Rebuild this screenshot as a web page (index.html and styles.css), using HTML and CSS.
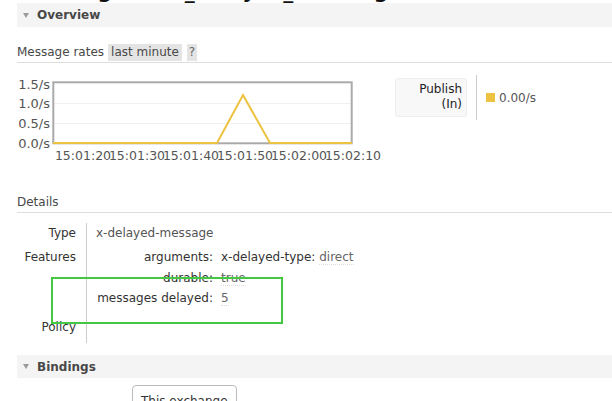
FILE: index.html
```html
<!DOCTYPE html>
<html>
<head>
<meta charset="utf-8">
<link rel="stylesheet" href="styles.css">
</head>
<body>
<div class="page">
  <h1 class="title">Exchange: test_delayed_exchange</h1>

  <div class="section-head"><span class="tri"></span><span class="head-text">Overview</span></div>

  <div class="rates">
    <span>Message rates</span>
    <span class="pill">last minute</span>
    <span class="pill q">?</span>
  </div>

  <div class="chart-row">
    <svg class="chart" width="370" height="90" viewBox="0 0 370 90">
      <line x1="37" y1="29.5" x2="335" y2="29.5" stroke="#f0f0f0" stroke-width="1"/>
      <line x1="37" y1="49.5" x2="335" y2="49.5" stroke="#f0f0f0" stroke-width="1"/>
      <rect x="36.3" y="8.3" width="298.4" height="61" fill="none" stroke="#aaaaaa" stroke-width="2"/>
      <polyline points="36,69 200,69 226,21 253,69 335,69" fill="none" stroke="#edc240" stroke-width="2" stroke-linejoin="miter"/>
      <g class="ylab">
        <text x="33" y="14.5" text-anchor="end">1.5/s</text>
        <text x="33" y="33.5" text-anchor="end">1.0/s</text>
        <text x="33" y="53.5" text-anchor="end">0.5/s</text>
        <text x="33" y="73.5" text-anchor="end">0.0/s</text>
      </g>
      <g class="xlab">
        <text x="66" y="86" text-anchor="middle">15:01:20</text>
        <text x="120" y="86" text-anchor="middle">15:01:30</text>
        <text x="174" y="86" text-anchor="middle">15:01:40</text>
        <text x="228" y="86" text-anchor="middle">15:01:50</text>
        <text x="282" y="86" text-anchor="middle">15:02:00</text>
        <text x="336" y="86" text-anchor="middle">15:02:10</text>
      </g>
    </svg>
    <div class="legend">
      <div class="legend-label"><div class="legend-box">Publish<br>(In)</div></div>
      <div class="legend-value"><span class="swatch"></span><span>0.00/s</span></div>
    </div>
  </div>

  <div class="details-title">Details</div>

  <div class="details">
    <div class="lbl r-type">Type</div>
    <div class="val r-type">x-delayed-message</div>

    <div class="lbl r-feat">Features</div>
    <div class="val r-feat">
      <div class="kv">
        <div class="k">arguments:</div>
        <div class="v"><span class="dark">x-delayed-type:</span> <span class="ul">direct</span></div>
        <div class="k">durable:</div>
        <div class="v"><span class="ul">true</span></div>
        <div class="k">messages delayed:</div>
        <div class="v"><span class="ul">5</span></div>
      </div>
    </div>

    <div class="lbl r-pol">Policy</div>
    <div class="val r-pol"></div>
  </div>

  <div class="section-head bindings"><span class="tri"></span><span class="head-text">Bindings</span></div>

  <div class="bind-btn">This exchange</div>
</div>

<div class="highlight"></div>
</body>
</html>
```

FILE: styles.css
```css
html, body {
  margin: 0;
  padding: 0;
  background: #ffffff;
}

body {
  font-family: "DejaVu Sans", Verdana, sans-serif;
  font-size: 12px;
  color: #484848;
  overflow: hidden;
  width: 612px;
  height: 401px;
}

.page {
  padding-left: 17px;
}

.title {
  margin: -21px 0 0 0;
  height: 24px;
  font-size: 20px;
  line-height: 24px;
  font-weight: bold;
  color: #111;
  white-space: nowrap;
}

.section-head {
  display: flex;
  align-items: center;
  height: 24px;
  background: #f4f4f4;
}

.tri {
  width: 0;
  height: 0;
  margin-left: 6px;
  border-top: 5px solid #9a9a9a;
  border-left: 3.5px solid transparent;
  border-right: 3.5px solid transparent;
}

.head-text {
  margin-left: 8px;
  font-weight: bold;
  color: #484848;
}

.rates {
  margin-top: 17px;
  display: flex;
  align-items: center;
  height: 17px;
  line-height: 17px;
  padding-bottom: 1px;
  border-bottom: 1px solid #dddddd;
  white-space: nowrap;
}

.pill {
  background: #e4e4e4;
  padding: 0 3px;
  margin-left: 4px;
  color: #484848;
}

.pill.q {
  padding: 0 2px;
  margin-left: 5px;
  color: #666;
}

.chart-row {
  margin-top: 11px;
  display: flex;
  align-items: flex-start;
}

.chart {
  display: block;
  flex: none;
}

.ylab text {
  font-family: "DejaVu Sans", Verdana, sans-serif;
  font-size: 13px;
  fill: #545454;
}

.xlab text {
  font-family: "DejaVu Sans", Verdana, sans-serif;
  font-size: 12.5px;
  fill: #545454;
}

.legend {
  display: flex;
  align-items: center;
  margin-left: 8px;
  margin-top: 1px;
}

.legend-label {
  padding: 3px 9px 3px 0;
  border-right: 1px solid #cccccc;
}

.legend-box {
  width: 62px;
  padding: 3px 4px 4px 4px;
  line-height: 15px;
  text-align: right;
  background: #f8f8f8;
  border: 1px solid #eeeeee;
  border-radius: 3px;
  color: #222;
}

.legend-value {
  display: flex;
  align-items: center;
  padding-left: 9px;
  color: #555;
}

.swatch {
  width: 9px;
  height: 9px;
  background: #edc240;
  margin-right: 4px;
}

.details-title {
  margin-top: 30px;
  line-height: 16px;
  padding-bottom: 2px;
  border-bottom: 1px solid #dddddd;
  color: #484848;
}

.details {
  margin-top: 10px;
  display: grid;
  grid-template-columns: 70px 1fr;
}

.lbl {
  text-align: right;
  padding-right: 10px;
  border-right: 1px solid #cccccc;
  color: #333;
  box-sizing: border-box;
}

.val {
  padding-left: 9px;
  color: #555;
}

.r-type {
  padding-top: 2px;
  padding-bottom: 6px;
  line-height: 16px;
}

.r-feat {
  line-height: 20.5px;
  padding-bottom: 10.5px;
}

.r-pol {
  line-height: 16px;
  padding-bottom: 8px;
}

.kv {
  display: grid;
  grid-template-columns: 117px auto;
  column-gap: 8px;
  justify-content: start;
}

.k {
  text-align: right;
  color: #333;
}

.v {
  color: #666;
}

.dark {
  color: #333;
}

.ul {
  border-bottom: 1px dotted #dddddd;
}

.bindings {
  margin-top: 12px;
  height: 23px;
}

.bind-btn {
  display: inline-block;
  margin-top: 7px;
  margin-left: 115px;
  padding: 7px 8px 8px 8px;
  border: 1px solid #bbbbbb;
  border-radius: 4px;
  line-height: 16px;
  width: 87px;
  color: #333;
}

.highlight {
  position: absolute;
  left: 51px;
  top: 277px;
  width: 232px;
  height: 47px;
  box-sizing: border-box;
  border: 2px solid #44c844;
}
```
